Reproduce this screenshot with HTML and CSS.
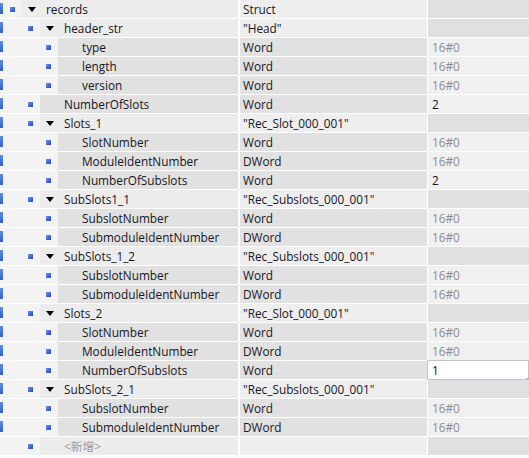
FILE: index.html
```html
<!DOCTYPE html>
<html>
<head>
<meta charset="utf-8">
<link rel="stylesheet" href="styles.css">
</head>
<body>
<div class="table">
  <div class="row struct"><div class="name"><span class="strip"></span><span class="indent l0"><i class="bullet"></i></span><span class="content"><i class="arrow"></i><span class="label">records</span></span></div><div class="type">Struct</div><div class="def"></div></div>
  <div class="row struct"><div class="name"><span class="strip"></span><span class="indent l1"><i class="bullet"></i></span><span class="content"><i class="arrow"></i><span class="label">header_str</span></span></div><div class="type">"Head"</div><div class="def"></div></div>
  <div class="row leaf"><div class="name"><span class="strip"></span><span class="indent l2"><i class="bullet"></i></span><span class="content"><span class="label">type</span></span></div><div class="type">Word</div><div class="def grey">16#0</div></div>
  <div class="row leaf"><div class="name"><span class="strip"></span><span class="indent l2"><i class="bullet"></i></span><span class="content"><span class="label">length</span></span></div><div class="type">Word</div><div class="def grey">16#0</div></div>
  <div class="row leaf"><div class="name"><span class="strip"></span><span class="indent l2"><i class="bullet"></i></span><span class="content"><span class="label">version</span></span></div><div class="type">Word</div><div class="def grey">16#0</div></div>
  <div class="row leaf"><div class="name"><span class="strip"></span><span class="indent l1"><i class="bullet"></i></span><span class="content"><span class="label">NumberOfSlots</span></span></div><div class="type">Word</div><div class="def">2</div></div>
  <div class="row struct"><div class="name"><span class="strip"></span><span class="indent l1"><i class="bullet"></i></span><span class="content"><i class="arrow"></i><span class="label">Slots_1</span></span></div><div class="type">"Rec_Slot_000_001"</div><div class="def"></div></div>
  <div class="row leaf"><div class="name"><span class="strip"></span><span class="indent l2"><i class="bullet"></i></span><span class="content"><span class="label">SlotNumber</span></span></div><div class="type">Word</div><div class="def grey">16#0</div></div>
  <div class="row leaf"><div class="name"><span class="strip"></span><span class="indent l2"><i class="bullet"></i></span><span class="content"><span class="label">ModuleIdentNumber</span></span></div><div class="type">DWord</div><div class="def grey">16#0</div></div>
  <div class="row leaf"><div class="name"><span class="strip"></span><span class="indent l2"><i class="bullet"></i></span><span class="content"><span class="label">NumberOfSubslots</span></span></div><div class="type">Word</div><div class="def">2</div></div>
  <div class="row struct"><div class="name"><span class="strip"></span><span class="indent l1"><i class="bullet"></i></span><span class="content"><i class="arrow"></i><span class="label">SubSlots1_1</span></span></div><div class="type">"Rec_Subslots_000_001"</div><div class="def"></div></div>
  <div class="row leaf"><div class="name"><span class="strip"></span><span class="indent l2"><i class="bullet"></i></span><span class="content"><span class="label">SubslotNumber</span></span></div><div class="type">Word</div><div class="def grey">16#0</div></div>
  <div class="row leaf"><div class="name"><span class="strip"></span><span class="indent l2"><i class="bullet"></i></span><span class="content"><span class="label">SubmoduleIdentNumber</span></span></div><div class="type">DWord</div><div class="def grey">16#0</div></div>
  <div class="row struct"><div class="name"><span class="strip"></span><span class="indent l1"><i class="bullet"></i></span><span class="content"><i class="arrow"></i><span class="label">SubSlots_1_2</span></span></div><div class="type">"Rec_Subslots_000_001"</div><div class="def"></div></div>
  <div class="row leaf"><div class="name"><span class="strip"></span><span class="indent l2"><i class="bullet"></i></span><span class="content"><span class="label">SubslotNumber</span></span></div><div class="type">Word</div><div class="def grey">16#0</div></div>
  <div class="row leaf"><div class="name"><span class="strip"></span><span class="indent l2"><i class="bullet"></i></span><span class="content"><span class="label">SubmoduleIdentNumber</span></span></div><div class="type">DWord</div><div class="def grey">16#0</div></div>
  <div class="row struct"><div class="name"><span class="strip"></span><span class="indent l1"><i class="bullet"></i></span><span class="content"><i class="arrow"></i><span class="label">Slots_2</span></span></div><div class="type">"Rec_Slot_000_001"</div><div class="def"></div></div>
  <div class="row leaf"><div class="name"><span class="strip"></span><span class="indent l2"><i class="bullet"></i></span><span class="content"><span class="label">SlotNumber</span></span></div><div class="type">Word</div><div class="def grey">16#0</div></div>
  <div class="row leaf"><div class="name"><span class="strip"></span><span class="indent l2"><i class="bullet"></i></span><span class="content"><span class="label">ModuleIdentNumber</span></span></div><div class="type">DWord</div><div class="def grey">16#0</div></div>
  <div class="row leaf"><div class="name"><span class="strip"></span><span class="indent l2"><i class="bullet"></i></span><span class="content"><span class="label">NumberOfSubslots</span></span></div><div class="type">Word</div><div class="def edit">1</div></div>
  <div class="row struct"><div class="name"><span class="strip"></span><span class="indent l1"><i class="bullet"></i></span><span class="content"><i class="arrow"></i><span class="label">SubSlots_2_1</span></span></div><div class="type">"Rec_Subslots_000_001"</div><div class="def"></div></div>
  <div class="row leaf"><div class="name"><span class="strip"></span><span class="indent l2"><i class="bullet"></i></span><span class="content"><span class="label">SubslotNumber</span></span></div><div class="type">Word</div><div class="def grey">16#0</div></div>
  <div class="row leaf"><div class="name"><span class="strip"></span><span class="indent l2"><i class="bullet"></i></span><span class="content"><span class="label">SubmoduleIdentNumber</span></span></div><div class="type">DWord</div><div class="def grey">16#0</div></div>
  <div class="row struct add"><div class="name"><span class="strip none"></span><span class="indent l1"><i class="bullet"></i></span><span class="content"><span class="label new">&lt;新增&gt;</span></span></div><div class="type"></div><div class="def"></div></div>
</div>
</body>
</html>
```
FILE: styles.css
```css
html, body {
  margin: 0;
  padding: 0;
  background: #ffffff;
}
body {
  font-family: "Open Sans", "Noto Sans CJK SC", sans-serif;
  font-size: 11.8px;
  color: #16161e;
  width: 529px;
  height: 458px;
  overflow: hidden;
}
.table {
  display: flex;
  flex-direction: column;
  gap: 1px;
}
.row {
  display: flex;
  height: 18px;
  line-height: 18px;
  gap: 1px;
}
.name {
  width: 238px;
  display: flex;
  flex: none;
  margin-right: 1px;
}
.strip {
  width: 3px;
  flex: none;
  background: linear-gradient(#f3f3f3 0 3px, #5f8fe0 3px, #2f5fc8 14px, #f3f3f3 14px);
}
.strip.none {
  background: #f3f3f3;
}
.indent {
  flex: none;
  display: flex;
  align-items: center;
  justify-content: flex-end;
  padding-right: 7px;
  box-sizing: border-box;
  background: #f3f3f3;
}
.indent.l0 { width: 19px; }
.indent.l1 { width: 37px; }
.indent.l2 { width: 55px; }
.bullet {
  display: block;
  width: 5px;
  height: 5px;
  background: linear-gradient(135deg, #6d8ff0, #2448c0);
}
.content {
  flex: 1;
  display: flex;
  align-items: center;
  padding-left: 24px;
  white-space: nowrap;
  overflow: hidden;
}
.struct .content {
  background: #ececec;
}
.leaf .content {
  background: #e1e1e1;
}
.arrow {
  display: block;
  width: 0;
  height: 0;
  border-left: 4px solid transparent;
  border-right: 4px solid transparent;
  border-top: 5px solid #000;
  margin-left: -18px;
  margin-right: 10px;
}
.label.new {
  color: #9a9a9a;
}
.type {
  width: 187px;
  flex: none;
  padding-left: 3px;
  box-sizing: border-box;
  white-space: nowrap;
}
.struct .type { background: #eeeeee; }
.leaf .type { background: #e1e1e1; }
.def {
  flex: 1;
  padding-left: 4px;
  white-space: nowrap;
  position: relative;
}
.struct .def { background: #e0e0e0; }
.leaf .def { background: #f0f0f0; }
.def.grey { color: #8c8c8c; }
.def.edit {
  background: #ffffff;
  box-shadow: inset 0 0 0 1px #bcc6d2;
  margin: -1px 0 -1px -1px;
  padding-left: 5px;
  line-height: 20px;
}
.def.edit::after {
  content: "";
  position: absolute;
  right: 0;
  bottom: -1px;
  width: 3px;
  height: 3px;
  background: #aab6c6;
}
```
